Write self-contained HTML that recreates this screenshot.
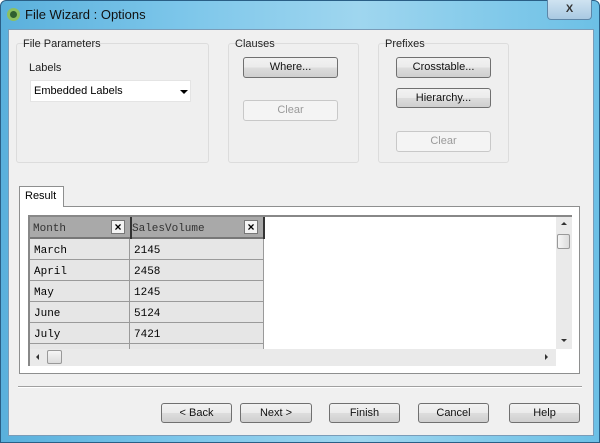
<!DOCTYPE html>
<html><head><style>
*{box-sizing:border-box;margin:0;padding:0}
body{width:600px;height:443px;overflow:hidden;background:#fff;font-family:"Liberation Sans",sans-serif;font-size:11px;color:#000;position:relative}
.a{position:absolute}
.frame{left:0;top:0;width:600px;height:443px;background:linear-gradient(90deg,#5ab0dc 0%,#7cc6ea 30%,#9fd6ef 60%,#6cc0e6 100%);border:1px solid #2a5f86;border-radius:6px 6px 0 0}
.client{left:8px;top:29px;width:586px;height:407px;background:#f0f0f0;border:1px solid #7a9cb8}
.grp{border:1px solid #dcdcdc;border-radius:3px;background:#efefef}
.lbl{font-size:11px;color:#222}
.btn{border:1px solid #707070;border-radius:3px;background:linear-gradient(#f2f2f2,#ebebeb 50%,#dddddd 51%,#cfcfcf);text-align:center;line-height:19px;font-size:11px;color:#111}
.dis{border:1px solid #c8c8c8;background:#f4f4f4;color:#9a9a9a}
.mono{font-family:"Liberation Mono",monospace;font-size:11px}
.cell{border-right:1px solid #9a9a9a;border-bottom:1px solid #9a9a9a;background:#e6e6e6;height:21px;line-height:21px;padding-left:4px}
.xb{width:14px;height:14px;border:1px solid #777;background:#f4f4f4;font-size:12px;line-height:12px;text-align:center;font-weight:bold}
</style></head><body>
<div class="a frame"></div>
<div class="a" style="left:7px;top:8px;width:13px;height:13px;border-radius:50%;background:#2f5f2f;border:3px solid #8cc060"></div>
<div class="a" style="left:25px;top:7px;font-size:13px;color:#111">File Wizard : Options</div>
<div class="a" style="left:547px;top:0;width:45px;height:20px;border:1px solid #5d86a8;border-top:none;border-radius:0 0 4px 4px;background:linear-gradient(#cfe3f1,#a9c9e2);text-align:center;font-weight:bold;font-size:11px;line-height:18px;color:#333">X</div>
<div class="a client"></div>

<div class="a grp" style="left:16px;top:43px;width:193px;height:120px"></div>
<div class="a lbl" style="left:22px;top:38px;padding:0 1px">File Parameters</div>
<div class="a lbl" style="left:29px;top:62px">Labels</div>
<div class="a" style="left:30px;top:80px;width:161px;height:22px;background:#fff;border:1px solid #e4e4e4;padding-left:3px;line-height:21px">Embedded Labels</div>
<div class="a" style="left:180px;top:90px;width:0;height:0;border-left:4px solid transparent;border-right:4px solid transparent;border-top:4px solid #000"></div>

<div class="a grp" style="left:228px;top:43px;width:131px;height:120px"></div>
<div class="a lbl" style="left:234px;top:38px;padding:0 1px">Clauses</div>
<div class="a btn" style="left:243px;top:57px;width:95px;height:21px">Where...</div>
<div class="a btn dis" style="left:243px;top:100px;width:95px;height:21px">Clear</div>

<div class="a grp" style="left:378px;top:43px;width:131px;height:120px"></div>
<div class="a lbl" style="left:384px;top:38px;padding:0 1px">Prefixes</div>
<div class="a btn" style="left:396px;top:57px;width:95px;height:21px">Crosstable...</div>
<div class="a btn" style="left:396px;top:88px;width:95px;height:20px">Hierarchy...</div>
<div class="a btn dis" style="left:396px;top:131px;width:95px;height:21px">Clear</div>

<div class="a" style="left:19px;top:206px;width:561px;height:168px;border:1px solid #8e8f8f;background:#fff"></div>
<div class="a" style="left:19px;top:186px;width:45px;height:21px;border:1px solid #8e8f8f;border-bottom:none;background:#fff;padding:3px 0 0 5px">Result</div>

<div class="a" style="left:28px;top:215px;width:544px;height:151px;background:#fff;border-top:2px solid #888;border-left:2px solid #888"></div>
<div class="a mono" style="left:30px;top:217px;width:234px;height:22px;background:#a9a9a9;border-bottom:2px solid #777"></div>
<div class="a mono" style="left:33px;top:223px;color:#333">Month</div>
<div class="a" style="left:130px;top:217px;width:2px;height:22px;background:#333"></div>
<div class="a mono" style="left:132px;top:223px;color:#333">SalesVolume</div>
<div class="a" style="left:263px;top:217px;width:2px;height:22px;background:#333"></div>
<div class="a xb" style="left:111px;top:220px">×</div>
<div class="a xb" style="left:244px;top:220px">×</div>

<div class="a mono" style="left:30px;top:239px;width:234px;height:110px;overflow:hidden">
<div style="display:flex"><div class="cell" style="width:100px;line-height:24px">March</div><div class="cell" style="width:134px;line-height:24px">2145</div></div>
<div style="display:flex"><div class="cell" style="width:100px;line-height:24px">April</div><div class="cell" style="width:134px;line-height:24px">2458</div></div>
<div style="display:flex"><div class="cell" style="width:100px;line-height:24px">May</div><div class="cell" style="width:134px;line-height:24px">1245</div></div>
<div style="display:flex"><div class="cell" style="width:100px;line-height:24px">June</div><div class="cell" style="width:134px;line-height:24px">5124</div></div>
<div style="display:flex"><div class="cell" style="width:100px;line-height:24px">July</div><div class="cell" style="width:134px;line-height:24px">7421</div></div>
<div style="display:flex"><div class="cell" style="width:100px;border-bottom:none"></div><div class="cell" style="width:134px;border-bottom:none"></div></div>
</div>

<div class="a" style="left:556px;top:217px;width:16px;height:132px;background:#eaeaea"></div>
<div class="a" style="left:561px;top:222px;border-left:3px solid transparent;border-right:3px solid transparent;border-bottom:3px solid #333"></div>
<div class="a" style="left:557px;top:234px;width:13px;height:15px;border:1px solid #999;border-radius:2px;background:linear-gradient(90deg,#f6f6f6,#dcdcdc)"></div>
<div class="a" style="left:561px;top:339px;border-left:3px solid transparent;border-right:3px solid transparent;border-top:3px solid #333"></div>
<div class="a" style="left:30px;top:349px;width:526px;height:17px;background:#eaeaea"></div>
<div class="a" style="left:36px;top:354px;border-top:3px solid transparent;border-bottom:3px solid transparent;border-right:3px solid #333"></div>
<div class="a" style="left:47px;top:350px;width:15px;height:14px;border:1px solid #999;border-radius:2px;background:linear-gradient(#f6f6f6,#dcdcdc)"></div>
<div class="a" style="left:545px;top:354px;border-top:3px solid transparent;border-bottom:3px solid transparent;border-left:3px solid #333"></div>

<div class="a" style="left:18px;top:386px;width:564px;height:1px;background:#a0a0a0"></div>
<div class="a" style="left:18px;top:387px;width:564px;height:1px;background:#fff"></div>

<div class="a btn" style="left:161px;top:403px;width:71px;height:20px">&lt; Back</div>
<div class="a btn" style="left:240px;top:403px;width:72px;height:20px">Next &gt;</div>
<div class="a btn" style="left:329px;top:403px;width:71px;height:20px">Finish</div>
<div class="a btn" style="left:418px;top:403px;width:71px;height:20px">Cancel</div>
<div class="a btn" style="left:509px;top:403px;width:71px;height:20px">Help</div>
</body></html>
